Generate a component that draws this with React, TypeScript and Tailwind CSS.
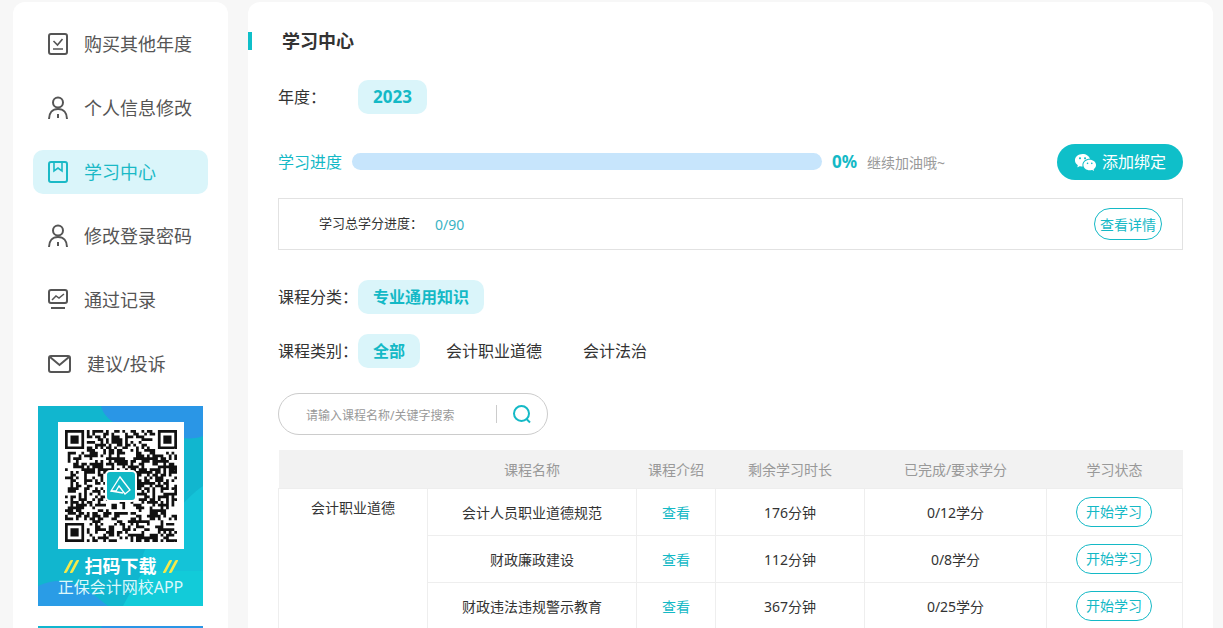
import type { ReactNode } from "react";
import { RiWechatFill } from "react-icons/ri";

const FONT = "font-['Noto_Sans','Noto_Sans_CJK_SC',sans-serif]";

/* =================== sidebar icons =================== */

function IconCheckBox() {
  return (
    <svg width="22" height="24" viewBox="0 0 22 24" fill="none" stroke="currentColor" strokeWidth="2">
      <rect x="1" y="2" width="18" height="20" rx="2" />
      <path d="M5.500 9l4 4 5-6M5 17h10" strokeWidth="1.6" />
    </svg>
  );
}

function IconPerson() {
  return (
    <svg width="22" height="24" viewBox="0 0 22 24" fill="none" stroke="currentColor" strokeWidth="2">
      <circle cx="10" cy="6.500" r="5" />
      <path d="M1 23c0-6 3.500-10 9-10s9 4 9 10M10 18v4" />
    </svg>
  );
}

function IconBook() {
  return (
    <svg width="22" height="24" viewBox="0 0 22 24" fill="none" stroke="currentColor" strokeWidth="2">
      <rect x="1" y="2" width="18" height="20" rx="2" />
      <path d="M6 2v9l4-3 4 3V2" strokeWidth="1.6" />
    </svg>
  );
}

function IconChart() {
  return (
    <svg width="22" height="24" viewBox="0 0 22 24" fill="none" stroke="currentColor" strokeWidth="2">
      <path d="M3 2h14a2 2 0 0 1 2 2v9a2 2 0 0 1-2 2H3a2 2 0 0 1-2-2V4a2 2 0 0 1 2-2z" />
      <path d="M4 12l4-4 3 2 5-4" strokeWidth="1.500" />
      <path d="M3 20h14" />
    </svg>
  );
}

function IconMail() {
  return (
    <svg width="24" height="20" viewBox="0 0 24 20" fill="none" stroke="currentColor" strokeWidth="2">
      <rect x="1" y="2" width="21" height="16" rx="2" />
      <path d="M2 3l9.500 8L21 3" />
    </svg>
  );
}

/* =================== qr =================== */

const QR_SIZE = 41;

function qrPath() {
  const dark: boolean[][] = [];
  let seed = 20231;
  for (let y = 0; y < QR_SIZE; y++) {
    const row: boolean[] = [];
    for (let x = 0; x < QR_SIZE; x++) {
      seed = (seed * 1103515245 + 12345) & 0x7fffffff;
      row.push(((seed >> 16) & 7) < 4);
    }
    dark.push(row);
  }
  const finder = (ox: number, oy: number) => {
    for (let y = -1; y < 8; y++) {
      for (let x = -1; x < 8; x++) {
        const px = ox + x;
        const py = oy + y;
        if (px < 0 || py < 0 || px >= QR_SIZE || py >= QR_SIZE) continue;
        const inside = x >= 0 && x <= 6 && y >= 0 && y <= 6;
        const ring = x === 0 || x === 6 || y === 0 || y === 6;
        const core = x >= 2 && x <= 4 && y >= 2 && y <= 4;
        dark[py][px] = inside && (ring || core);
      }
    }
  };
  finder(0, 0);
  finder(QR_SIZE - 7, 0);
  finder(0, QR_SIZE - 7);
  let d = "";
  dark.forEach((row, y) =>
    row.forEach((on, x) => {
      if (on) d += `M${x} ${y}h1v1h-1z`;
    })
  );
  return d;
}

function QrBlock() {
  return (
    <div className="relative mx-auto flex h-[127px] w-[126px] items-center justify-center bg-white">
      <svg width="112" height="112" viewBox="0 0 41 41">
        <path d={qrPath()} fill="#111" />
      </svg>
      {/* логотип в центре кода */}
      <div className="absolute left-[47px] top-[48px] flex h-[32px] w-[32px] items-center justify-center rounded-[5px] border-2 border-white bg-[#12b9c6]">
        <svg width="24" height="24" viewBox="0 0 24 24" fill="none" stroke="#fff" strokeWidth="1.300">
          <path d="M2 17L11 3l10 13-5 4-6-8-3 5z" />
          <path d="M2 17l12 2" />
        </svg>
      </div>
    </div>
  );
}

function Slashes() {
  return (
    <span className="flex gap-[3px] px-[3px]">
      <span className="h-[13px] w-[3px] -skew-x-[28deg] rounded-[1px] bg-[#f5e94a]" />
      <span className="h-[13px] w-[3px] -skew-x-[28deg] rounded-[1px] bg-[#f5e94a]" />
    </span>
  );
}

function Banner({ children }: { children?: ReactNode }) {
  return (
    <div className="relative mx-[5px] h-[200px] w-[165px] shrink-0 overflow-hidden bg-[#11b6cf]">
      <svg className="absolute inset-0" width="165" height="200" viewBox="0 0 165 200">
        <path d="M63 0h102v30c-22 8-40-6-60-6-18 0-38-8-42-24z" fill="#2a96e6" />
        <path d="M165 80v85H105c-6-25 18-40 30-55 8-10 18-22 30-30z" fill="#14c3d8" />
        <path d="M0 180c30-14 50 4 70 20H0z" fill="#2a9ce6" />
        <path d="M105 165h60v35H85c6-12 14-24 20-35z" fill="#12cbd9" />
      </svg>
      {children && <div className="relative pt-4">{children}</div>}
    </div>
  );
}

/* =================== sidebar =================== */

const NAV = [
  { label: "购买其他年度", icon: <IconCheckBox /> },
  { label: "个人信息修改", icon: <IconPerson /> },
  { label: "学习中心", icon: <IconBook />, active: true },
  { label: "修改登录密码", icon: <IconPerson /> },
  { label: "通过记录", icon: <IconChart /> },
  { label: "建议/投诉", icon: <IconMail />, wide: true },
];

function Sidebar() {
  return (
    <aside className="h-[700px] w-[215px] shrink-0 rounded-t-xl bg-white px-5 pt-5">
      <nav className="flex flex-col gap-5">
        {NAV.map((n) => (
          <div
            key={n.label}
            className={[
              "flex h-11 items-center rounded-[10px] pl-[15px] text-[18px]",
              n.active ? "bg-[#daf5fa] text-[#1ab9c6]" : "text-[#555]",
            ].join(" ")}
          >
            <span className={n.wide ? "mr-[15px] w-6" : "mr-[14px] w-[22px]"}>{n.icon}</span>
            {n.label}
          </div>
        ))}
      </nav>
      <div className="mt-5 flex flex-col gap-5">
        <Banner>
          <QrBlock />
          <div className="mt-[7px] flex items-center justify-center gap-[6px] text-[18px] font-bold leading-5 text-white">
            <Slashes />
            <span>扫码下载</span>
            <Slashes />
          </div>
          <div className="mt-[1px] text-center text-[16px] leading-5 text-[#dcf8fb]">正保会计网校APP</div>
        </Banner>
        <Banner />
      </div>
    </aside>
  );
}

/* =================== main =================== */

function Pill({ children, className = "" }: { children: ReactNode; className?: string }) {
  return (
    <span
      className={`flex h-[34px] items-center justify-center rounded-[10px] bg-[#daf5fa] text-[16px] font-bold text-[#14b9c6] ${className}`}
    >
      {children}
    </span>
  );
}

const ROWS = [
  { name: "会计人员职业道德规范", left: "176分钟", credit: "0/12学分" },
  { name: "财政廉政建设", left: "112分钟", credit: "0/8学分" },
  { name: "财政违法违规警示教育", left: "367分钟", credit: "0/25学分" },
];

function CourseTable() {
  return (
    <table className="mt-[15px] w-[904px] table-fixed border-collapse text-center text-[14px] text-[#333]">
      <colgroup>
        <col className="w-[149px]" />
        <col className="w-[209px]" />
        <col className="w-[79px]" />
        <col className="w-[149px]" />
        <col className="w-[182px]" />
        <col className="w-[136px]" />
      </colgroup>
      <thead>
        <tr className="h-[38px] bg-[#f2f2f2] text-[#999]">
          <th className="pt-px font-normal"></th>
          <th className="pt-px font-normal">课程名称</th>
          <th className="pt-px font-normal">课程介绍</th>
          <th className="pt-px font-normal">剩余学习时长</th>
          <th className="pt-px font-normal">已完成/要求学分</th>
          <th className="pt-px font-normal">学习状态</th>
        </tr>
      </thead>
      <tbody>
        {ROWS.map((r, i) => (
          <tr key={r.name} className="h-[47px]">
            {i === 0 && (
              <td rowSpan={3} className="border border-[#eee] pt-[8px] align-top">
                会计职业道德
              </td>
            )}
            <td className="border border-[#eee] pt-[2px]">{r.name}</td>
            <td className="border border-[#eee] pt-[2px] text-[#14b9c6]">查看</td>
            <td className="border border-[#eee] pt-[2px]">{r.left}</td>
            <td className="border border-[#eee] pt-[2px]">{r.credit}</td>
            <td className="border border-[#eee] pr-[1px]">
              <span className="mx-auto flex h-[30px] w-[76px] items-center justify-center rounded-full border border-[#14b9c6] text-[#14b9c6]">
                开始学习
              </span>
            </td>
          </tr>
        ))}
      </tbody>
    </table>
  );
}

function Main() {
  return (
    <main className="h-[700px] w-[965px] shrink-0 rounded-t-xl bg-white pt-[30px]">
      <div className="flex h-[18px] items-center">
        <span className="h-[18px] w-1 bg-[#0fbfc9]" />
        <h1 className="ml-[30px] text-[18px] font-bold text-[#333]">学习中心</h1>
      </div>

      <div className="pl-[30px]">
        <div className="mt-[30px] flex items-center text-[16px] text-[#333]">
          <span className="w-20">年度：</span>
          <Pill className="w-[69px] text-[17px]">2023</Pill>
        </div>

        <div className="mt-[30px] flex h-[36px] w-[905px] items-center">
          <span className="text-[16px] text-[#14b9c6]">学习进度</span>
          <div className="-mt-px ml-[10px] h-[17px] w-[470px] rounded-full bg-[#c7e5fc]" />
          <span className="ml-[10px] text-[17px] font-bold text-[#14b9c6]">0%</span>
          <span className="ml-[10px] text-[14px] text-[#999]">继续加油哦~</span>
          <button className="ml-auto flex h-[36px] w-[126px] items-center justify-center gap-[5px] rounded-full bg-[#0fbfc9] text-[16px] text-white">
            <RiWechatFill size={23} />
            添加绑定
          </button>
        </div>

        <div className="mt-[18px] flex h-[52px] w-[905px] items-center border border-[#e2e2e2] pl-10 pr-5">
          <span className="text-[13px] text-[#333]">学习总学分进度：</span>
          <span className="ml-[12px] text-[14px] text-[#3ab3c4]">0/90</span>
          <span className="ml-auto flex h-8 w-[68px] items-center justify-center rounded-full border border-[#14b9c6] text-[14px] text-[#14b9c6]">
            查看详情
          </span>
        </div>

        <div className="mt-[30px] flex items-center text-[16px] text-[#333]">
          <span className="w-20">课程分类：</span>
          <Pill className="w-[126px]">专业通用知识</Pill>
        </div>

        <div className="mt-5 flex items-center text-[16px] text-[#333]">
          <span className="w-20">课程类别：</span>
          <Pill className="w-[62px]">全部</Pill>
          <span className="ml-[26px]">会计职业道德</span>
          <span className="ml-[41px]">会计法治</span>
        </div>

        <div className="mt-[25px] flex h-[42px] w-[270px] items-center rounded-full border border-[#ccc] pl-[27px]">
          <span className="w-[190px] pt-[3px] text-[12px] text-[#999]">请输入课程名称/关键字搜索</span>
          <span className="h-[18px] w-px bg-[#ccc]" />
          <svg className="ml-[15px]" width="20" height="20" viewBox="0 0 20 20" fill="none" stroke="#14b9c6" strokeWidth="2">
            <circle cx="9.500" cy="9.500" r="7.500" />
            <path d="M14.500 15l3.500 3.500" />
          </svg>
        </div>

        <CourseTable />
      </div>
    </main>
  );
}

export default function App() {
  return (
    <div className={`flex h-[628px] w-[1223px] gap-5 overflow-hidden bg-[#f7f7f7] pl-[13px] pt-[2px] ${FONT}`}>
      <Sidebar />
      <Main />
    </div>
  );
}
